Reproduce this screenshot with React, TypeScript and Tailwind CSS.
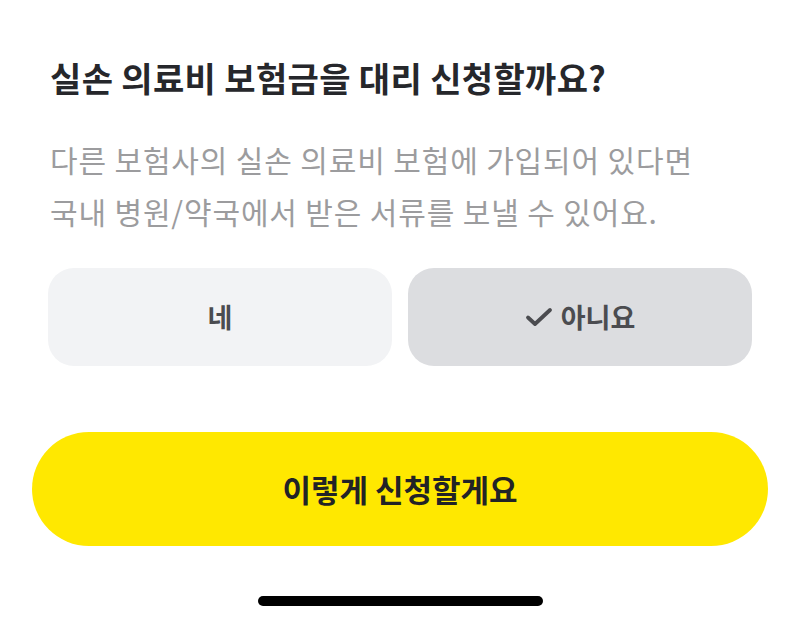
export default function App() {
	return (
		<div
			className="w-[800px] h-[623px] bg-white flex flex-col overflow-hidden"
			style={{ fontFamily: '"Noto Sans CJK KR", "Noto Sans", sans-serif' }}
		>
			<div className="px-[50px] pt-[55px]">
				<h1 className="text-[34px] leading-[46px] font-bold text-[#26272b] tracking-[0.35px]">
					실손 의료비 보험금을 대리 신청할까요?
				</h1>
				<p className="mt-[32px] text-[30px] leading-[52px] text-[#9c9c9e] tracking-[0.85px]">
					다른 보험사의 실손 의료비 보험에 가입되어 있다면
					<br />
					국내 병원/약국에서 받은 서류를 보낼 수 있어요.
				</p>
			</div>

			<div className="mt-[31px] px-[48px] grid grid-cols-2 gap-[16px]">
				<button className="h-[98px] rounded-[26px] bg-[#f2f3f5] flex items-center justify-center text-[27px] font-bold text-[#4b4c50]">
					네
				</button>
				<button className="h-[98px] rounded-[26px] bg-[#dcdde0] flex items-center justify-center gap-[8px] text-[27px] font-bold text-[#4b4c50]">
					<svg width="28" height="22" viewBox="0 0 28 22" fill="none">
						<path
							d="M3 11.5l7 6.5L25 4"
							stroke="#4b4c50"
							strokeWidth="3.8"
							strokeLinecap="round"
							strokeLinejoin="round"
						/>
					</svg>
					아니요
				</button>
			</div>

			<div className="mt-[66px] px-[32px]">
				<button className="w-full h-[114px] rounded-full bg-[#ffe800] flex items-center justify-center text-[31px] font-bold text-[#222326]">
					이렇게 신청할게요
				</button>
			</div>

			<div className="mt-[50px] flex justify-center">
				<div className="w-[285px] h-[10px] rounded-full bg-black" />
			</div>
		</div>
	);
}
